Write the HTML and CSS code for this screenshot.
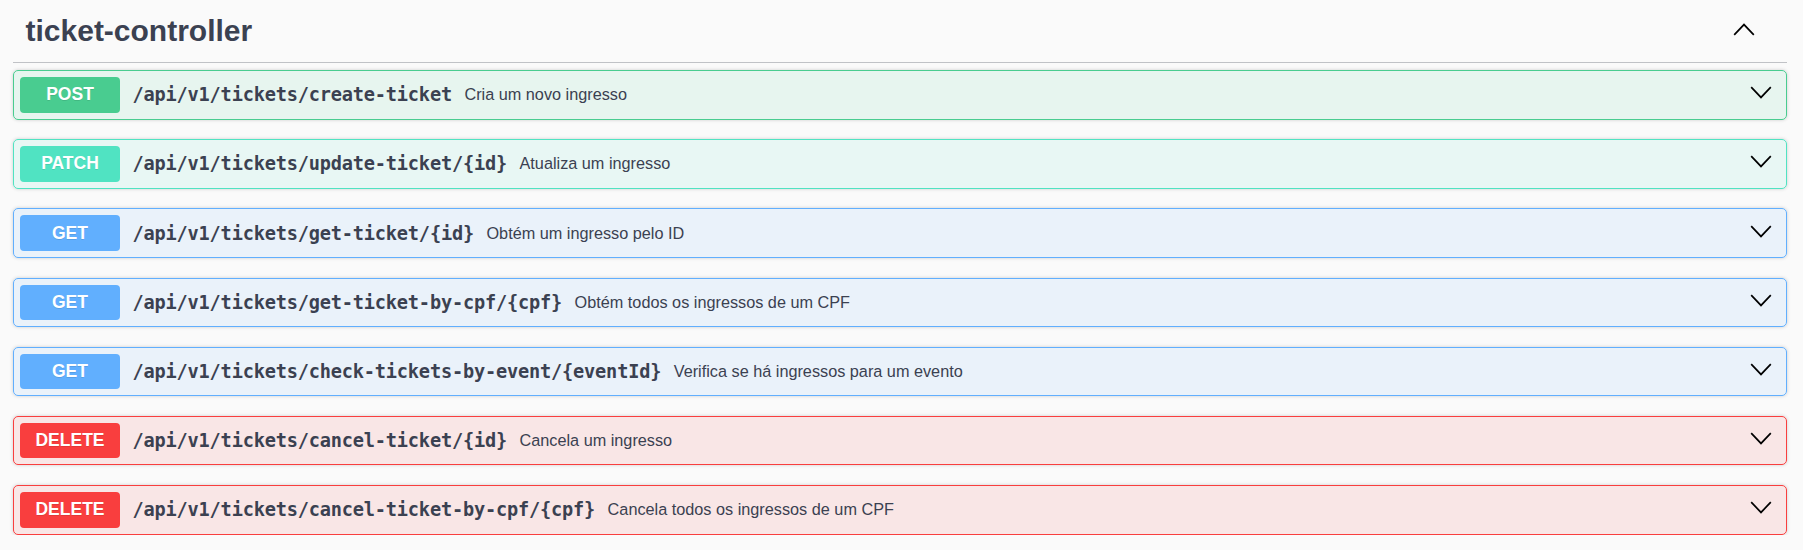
FILE: index.html
```html
<!DOCTYPE html>
<html lang="pt">
<head>
<meta charset="utf-8">
<title>ticket-controller</title>
<link rel="stylesheet" href="styles.css">
</head>
<body>
<div class="tag-section">
  <h3 class="tag">
    <span class="tag-name">ticket-controller</span>
    <span class="toggle">
      <svg width="22" height="13" viewBox="0 0 22 13"><polyline points="1.2,11.8 11,1.6 20.8,11.8" fill="none" stroke="#000" stroke-width="1.7"/></svg>
    </span>
  </h3>
  <div class="ops">
    <div class="op op-post">
      <span class="method">POST</span>
      <span class="path">/api/v1/tickets/create-ticket</span>
      <span class="desc">Cria um novo ingresso</span>
      <span class="arrow"><svg width="22" height="13" viewBox="0 0 22 13"><polyline points="1.2,1.2 11,11.4 20.8,1.2" fill="none" stroke="#000" stroke-width="1.7"/></svg></span>
    </div>
    <div class="op op-patch">
      <span class="method">PATCH</span>
      <span class="path">/api/v1/tickets/update-ticket/{id}</span>
      <span class="desc">Atualiza um ingresso</span>
      <span class="arrow"><svg width="22" height="13" viewBox="0 0 22 13"><polyline points="1.2,1.2 11,11.4 20.8,1.2" fill="none" stroke="#000" stroke-width="1.7"/></svg></span>
    </div>
    <div class="op op-get">
      <span class="method">GET</span>
      <span class="path">/api/v1/tickets/get-ticket/{id}</span>
      <span class="desc">Obtém um ingresso pelo ID</span>
      <span class="arrow"><svg width="22" height="13" viewBox="0 0 22 13"><polyline points="1.2,1.2 11,11.4 20.8,1.2" fill="none" stroke="#000" stroke-width="1.7"/></svg></span>
    </div>
    <div class="op op-get">
      <span class="method">GET</span>
      <span class="path">/api/v1/tickets/get-ticket-by-cpf/{cpf}</span>
      <span class="desc">Obtém todos os ingressos de um CPF</span>
      <span class="arrow"><svg width="22" height="13" viewBox="0 0 22 13"><polyline points="1.2,1.2 11,11.4 20.8,1.2" fill="none" stroke="#000" stroke-width="1.7"/></svg></span>
    </div>
    <div class="op op-get">
      <span class="method">GET</span>
      <span class="path">/api/v1/tickets/check-tickets-by-event/{eventId}</span>
      <span class="desc">Verifica se há ingressos para um evento</span>
      <span class="arrow"><svg width="22" height="13" viewBox="0 0 22 13"><polyline points="1.2,1.2 11,11.4 20.8,1.2" fill="none" stroke="#000" stroke-width="1.7"/></svg></span>
    </div>
    <div class="op op-delete">
      <span class="method">DELETE</span>
      <span class="path">/api/v1/tickets/cancel-ticket/{id}</span>
      <span class="desc">Cancela um ingresso</span>
      <span class="arrow"><svg width="22" height="13" viewBox="0 0 22 13"><polyline points="1.2,1.2 11,11.4 20.8,1.2" fill="none" stroke="#000" stroke-width="1.7"/></svg></span>
    </div>
    <div class="op op-delete">
      <span class="method">DELETE</span>
      <span class="path">/api/v1/tickets/cancel-ticket-by-cpf/{cpf}</span>
      <span class="desc">Cancela todos os ingressos de um CPF</span>
      <span class="arrow"><svg width="22" height="13" viewBox="0 0 22 13"><polyline points="1.2,1.2 11,11.4 20.8,1.2" fill="none" stroke="#000" stroke-width="1.7"/></svg></span>
    </div>
  </div>
</div>
</body>
</html>
```
FILE: styles.css
```css
html, body {
  margin: 0;
  padding: 0;
  background: #fafafa;
}

body {
  font-family: "Liberation Sans", Arial, sans-serif;
  color: #3b4151;
}

.tag-section {
  margin: 0 16px 0 13px;
}

.tag {
  box-sizing: border-box;
  height: 63px;
  margin: 0 0 7px 0;
  padding: 0 32.5px 0 12.5px;
  display: flex;
  align-items: center;
  border-bottom: 1px solid rgba(59, 65, 81, 0.3);
  font-size: 30px;
  font-weight: 700;
  color: #3b4151;
}

.tag-name {
  flex: 1 1 auto;
}

.toggle {
  display: flex;
  margin-bottom: 3px;
}

.ops {
  display: flex;
  flex-direction: column;
  gap: 19.7px;
}

.op {
  display: flex;
  align-items: center;
  padding: 6px;
  border: 1px solid #000;
  border-radius: 5px;
  box-shadow: 0 0 3.75px rgba(0, 0, 0, 0.19);
}

.method {
  box-sizing: border-box;
  min-width: 100px;
  height: 35.5px;
  display: flex;
  align-items: center;
  justify-content: center;
  border-radius: 4px;
  font-size: 17.5px;
  font-weight: 700;
  color: #fff;
  text-shadow: 0 1px 0 rgba(0, 0, 0, 0.1);
}

.path {
  padding: 0 12.5px;
  font-family: "DejaVu Sans Mono", "Liberation Mono", monospace;
  font-size: 18.6px;
  letter-spacing: -0.18px;
  font-weight: 700;
  color: #3b4151;
  white-space: nowrap;
}

.desc {
  flex: 1 1 auto;
  font-size: 16.25px;
  color: #3b4151;
}

.arrow {
  display: flex;
  margin: 0 8.5px 4px 0;
}

.op-post {
  background: rgba(73, 204, 144, 0.1);
  border-color: #49cc90;
}
.op-post .method { background: #49cc90; }

.op-patch {
  background: rgba(80, 227, 194, 0.1);
  border-color: #50e3c2;
}
.op-patch .method { background: #50e3c2; }

.op-get {
  background: rgba(97, 175, 254, 0.1);
  border-color: #61affe;
}
.op-get .method { background: #61affe; }

.op-delete {
  background: rgba(249, 62, 62, 0.1);
  border-color: #f93e3e;
}
.op-delete .method { background: #f93e3e; }
```
